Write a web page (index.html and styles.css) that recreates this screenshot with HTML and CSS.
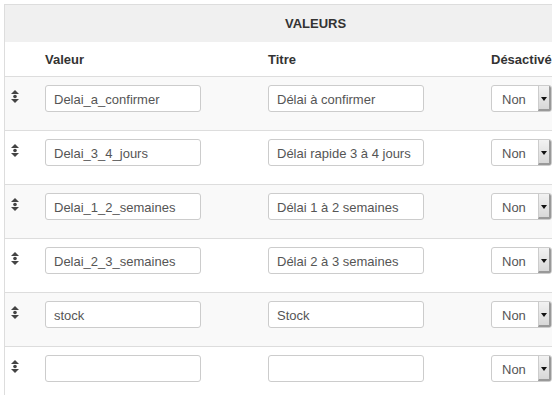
FILE: index.html
```html
<!DOCTYPE html>
<html lang="fr">
<head>
  <meta charset="UTF-8" />
  <title>Valeurs</title>
  <link rel="stylesheet" href="styles.css">
</head>
<body>
  <div class="wrap">
    <table class="values">
      <thead>
        <tr class="caption-row">
          <th colspan="4">VALEURS</th>
        </tr>
        <tr class="head-row">
          <th class="col-sort"></th>
          <th class="col-value">Valeur</th>
          <th class="col-title">Titre</th>
          <th class="col-off">Désactivé</th>
        </tr>
      </thead>
      <tbody id="rows"></tbody>
    </table>
  </div>

  <script>
    const values = [
      ['Delai_a_confirmer', 'Délai à confirmer'],
      ['Delai_3_4_jours', 'Délai rapide 3 à 4 jours'],
      ['Delai_1_2_semaines', 'Délai 1 à 2 semaines'],
      ['Delai_2_3_semaines', 'Délai 2 à 3 semaines'],
      ['stock', 'Stock'],
      ['', '']
    ];
    const tbody = document.getElementById('rows');
    const sortIcon = '<svg class="sort" width="8" height="13" viewBox="0 0 8 13"><path d="M4 0 L8 4 H0 Z M4 13 L0 9 H8 Z" fill="#444"/><circle cx="4" cy="6.5" r="1.8" fill="#444"/></svg>';

    values.forEach(([val, title]) => {
      const tr = document.createElement('tr');
      tr.innerHTML =
        '<td class="col-sort">' + sortIcon + '</td>' +
        '<td><input class="field" type="text" value="' + val + '"></td>' +
        '<td><input class="field" type="text" value="' + title + '"></td>' +
        '<td><span class="select"><select><option>Non</option><option>Oui</option></select></span></td>';
      tbody.appendChild(tr);
    });
  </script>
</body>
</html>
```

FILE: styles.css
```css
body {
  margin: 0;
  padding: 4px 0 0 4px;
  font-family: "Liberation Sans", Helvetica, Arial, sans-serif;
  font-size: 13px;
  color: #333;
  background-color: #fff;
  overflow: hidden;
}
.wrap {
  width: 640px;
}
.values {
  width: 622px;
  border-collapse: collapse;
  border-top: 1px solid #ddd;
  border-left: 1px solid #ddd;
}
.values th {
  text-align: left;
  font-weight: bold;
  padding: 0 8px;
}
.caption-row th {
  text-align: center;
  height: 37px;
  background-color: #f0f0f0;
  padding-left: 0;
  padding-right: 0;
}
.head-row th {
  height: 34px;
  border-bottom: 1px solid #ddd;
}
.values td {
  padding: 8px 8px 0 8px;
  height: 40px;
  vertical-align: top;
  border-bottom: 1px solid #ddd;
}
.values tbody tr:nth-child(odd) {
  background-color: #f9f9f9;
}
.col-sort {
  width: 16px;
}
.values td.col-sort {
  padding-left: 6px;
  padding-top: 13px;
}
.sort {
  display: block;
}
.col-value, .col-title {
  width: 207px;
}
.field {
  box-sizing: border-box;
  width: 156px;
  height: 27px;
  padding: 2px 8px 0 8px;
  border: 1px solid #ccc;
  border-radius: 3px;
  background-color: #fff;
  font-family: inherit;
  font-size: 13px;
  color: #555;
}
.select {
  position: relative;
  display: inline-block;
  width: 61px;
  height: 27px;
  box-sizing: border-box;
  border: 1px solid #ccc;
  border-radius: 3px;
  background-color: #fff;
  overflow: hidden;
}
.select select {
  -webkit-appearance: none;
  appearance: none;
  border: none;
  background: transparent;
  width: 100%;
  height: 100%;
  padding: 2px 0 0 10px;
  font-family: inherit;
  font-size: 13px;
  color: #555;
  outline: none;
}
.select::after {
  content: "";
  position: absolute;
  top: 0;
  right: 0;
  width: 10px;
  height: 23px;
  background: linear-gradient(#f2f2f2, #d8d8d8);
  border-left: 1px solid #ccc;
  border-right: 2px solid #999;
  border-bottom: 2px solid #999;
  pointer-events: none;
}
.select::before {
  content: "";
  position: absolute;
  top: 11px;
  right: 4px;
  border-left: 3px solid transparent;
  border-right: 3px solid transparent;
  border-top: 4px solid #111;
  z-index: 1;
  pointer-events: none;
}
```
